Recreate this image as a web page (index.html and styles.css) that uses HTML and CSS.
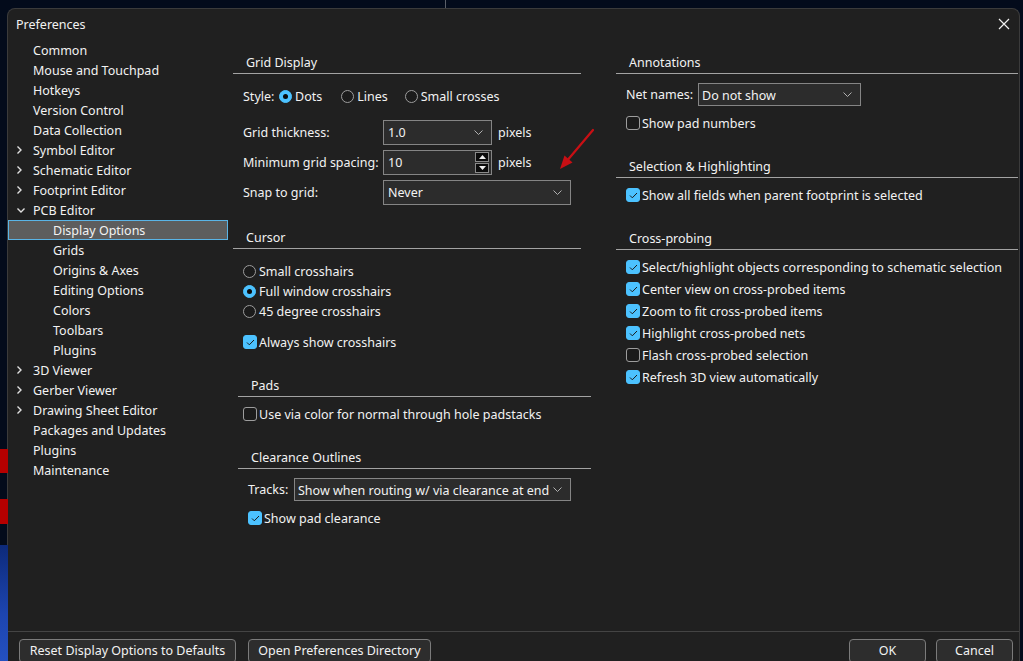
FILE: index.html
```html
<!DOCTYPE html>
<html>
<head>
<meta charset="utf-8">
<title>Preferences</title>
<link rel="stylesheet" href="styles.css">
</head>
<body>
<div class="desk-line"></div>
<div class="stripe stripe-red1"></div>
<div class="stripe stripe-red2"></div>
<div class="stripe stripe-blue"></div>

<div class="dialog">
  <div class="titlebar">
    <span class="title">Preferences</span>
    <svg class="close" width="12" height="12" viewBox="0 0 12 12"><path d="M1 1L11 11M11 1L1 11" stroke="#f0f0f0" stroke-width="1.2" fill="none"/></svg>
  </div>

  <div class="main">
    <ul class="tree">
      <li class="item">Common</li>
      <li class="item">Mouse and Touchpad</li>
      <li class="item">Hotkeys</li>
      <li class="item">Version Control</li>
      <li class="item">Data Collection</li>
      <li class="item has-chev"><span class="chev"><svg width="7" height="10" viewBox="0 0 7 10"><path d="M1.5 1.5L5 5L1.5 8.5" stroke="#e0e0e0" stroke-width="1.4" fill="none"/></svg></span>Symbol Editor</li>
      <li class="item has-chev"><span class="chev"><svg width="7" height="10" viewBox="0 0 7 10"><path d="M1.5 1.5L5 5L1.5 8.5" stroke="#e0e0e0" stroke-width="1.4" fill="none"/></svg></span>Schematic Editor</li>
      <li class="item has-chev"><span class="chev"><svg width="7" height="10" viewBox="0 0 7 10"><path d="M1.5 1.5L5 5L1.5 8.5" stroke="#e0e0e0" stroke-width="1.4" fill="none"/></svg></span>Footprint Editor</li>
      <li class="item has-chev"><span class="chev"><svg width="10" height="7" viewBox="0 0 10 7"><path d="M1.5 1.5L5 5L8.5 1.5" stroke="#e0e0e0" stroke-width="1.4" fill="none"/></svg></span>PCB Editor</li>
      <li class="item sub selected">Display Options</li>
      <li class="item sub">Grids</li>
      <li class="item sub">Origins &amp; Axes</li>
      <li class="item sub">Editing Options</li>
      <li class="item sub">Colors</li>
      <li class="item sub">Toolbars</li>
      <li class="item sub">Plugins</li>
      <li class="item has-chev"><span class="chev"><svg width="7" height="10" viewBox="0 0 7 10"><path d="M1.5 1.5L5 5L1.5 8.5" stroke="#e0e0e0" stroke-width="1.4" fill="none"/></svg></span>3D Viewer</li>
      <li class="item has-chev"><span class="chev"><svg width="7" height="10" viewBox="0 0 7 10"><path d="M1.5 1.5L5 5L1.5 8.5" stroke="#e0e0e0" stroke-width="1.4" fill="none"/></svg></span>Gerber Viewer</li>
      <li class="item has-chev"><span class="chev"><svg width="7" height="10" viewBox="0 0 7 10"><path d="M1.5 1.5L5 5L1.5 8.5" stroke="#e0e0e0" stroke-width="1.4" fill="none"/></svg></span>Drawing Sheet Editor</li>
      <li class="item">Packages and Updates</li>
      <li class="item">Plugins</li>
      <li class="item">Maintenance</li>
    </ul>

    <div class="panel">
      <div class="col col-left">
        <section class="sec sec-grid">
          <div class="sec-head">Grid Display</div>
          <div class="style-row">
            <span class="lbl-style">Style:</span>
            <span class="opt"><span class="radio on"></span>Dots</span>
            <span class="opt opt-lines"><span class="radio"></span>Lines</span>
            <span class="opt opt-crosses"><span class="radio"></span>Small crosses</span>
          </div>
          <div class="frow frow-first">
            <span class="flabel">Grid thickness:</span>
            <span class="combo w-thick"><span class="cval">1.0</span><svg class="cchev" width="9" height="5" viewBox="0 0 9 5"><path d="M0.5 0.5L4.5 4.5L8.5 0.5" stroke="#b0b0b0" fill="none"/></svg></span>
            <span class="unit">pixels</span>
          </div>
          <div class="frow">
            <span class="flabel">Minimum grid spacing:</span>
            <span class="spin"><span class="cval">10</span>
              <span class="spin-btns">
                <span class="sbtn"><svg width="7" height="4" viewBox="0 0 7 4"><path d="M0 4L3.5 0L7 4Z" fill="#f0f0f0"/></svg></span>
                <span class="sbtn"><svg width="7" height="4" viewBox="0 0 7 4"><path d="M0 0L3.5 4L7 0Z" fill="#f0f0f0"/></svg></span>
              </span>
            </span>
            <span class="unit">pixels</span>
          </div>
          <div class="frow">
            <span class="flabel">Snap to grid:</span>
            <span class="combo w-snap"><span class="cval">Never</span><svg class="cchev" width="9" height="5" viewBox="0 0 9 5"><path d="M0.5 0.5L4.5 4.5L8.5 0.5" stroke="#b0b0b0" fill="none"/></svg></span>
          </div>
        </section>

        <section class="sec sec-cursor">
          <div class="sec-head">Cursor</div>
          <div class="opts">
            <div class="line"><span class="radio"></span>Small crosshairs</div>
            <div class="line"><span class="radio on"></span>Full window crosshairs</div>
            <div class="line"><span class="radio"></span>45 degree crosshairs</div>
          </div>
          <div class="line line-check"><span class="check on"><svg width="9" height="7" viewBox="0 0 9 7"><path d="M1 3.5L3.3 5.8L8 1" stroke="#1a1a1a" stroke-width="1" fill="none"/></svg></span>Always show crosshairs</div>
        </section>

        <section class="sec sec-pads">
          <div class="sec-head">Pads</div>
          <div class="line line-first"><span class="check"></span>Use via color for normal through hole padstacks</div>
        </section>

        <section class="sec sec-clear">
          <div class="sec-head">Clearance Outlines</div>
          <div class="frow2">
            <span class="flabel2">Tracks:</span>
            <span class="combo combo-sm w-tracks"><span class="cval">Show when routing w/ via clearance at end</span><svg class="cchev" width="9" height="5" viewBox="0 0 9 5"><path d="M0.5 0.5L4.5 4.5L8.5 0.5" stroke="#b0b0b0" fill="none"/></svg></span>
          </div>
          <div class="line line-first"><span class="check on"><svg width="9" height="7" viewBox="0 0 9 7"><path d="M1 3.5L3.3 5.8L8 1" stroke="#1a1a1a" stroke-width="1" fill="none"/></svg></span>Show pad clearance</div>
        </section>
      </div>

      <div class="col col-right">
        <section class="sec sec-annot">
          <div class="sec-head">Annotations</div>
          <div class="frow2">
            <span class="flabel3">Net names:</span>
            <span class="combo combo-sm w-net"><span class="cval">Do not show</span><svg class="cchev" width="9" height="5" viewBox="0 0 9 5"><path d="M0.5 0.5L4.5 4.5L8.5 0.5" stroke="#b0b0b0" fill="none"/></svg></span>
          </div>
          <div class="line line-first"><span class="check"></span>Show pad numbers</div>
        </section>

        <section class="sec sec-sel">
          <div class="sec-head">Selection &amp; Highlighting</div>
          <div class="line line-first"><span class="check on"><svg width="9" height="7" viewBox="0 0 9 7"><path d="M1 3.5L3.3 5.8L8 1" stroke="#1a1a1a" stroke-width="1" fill="none"/></svg></span>Show all fields when parent footprint is selected</div>
        </section>

        <section class="sec sec-cross">
          <div class="sec-head">Cross-probing</div>
          <div class="cross-list">
            <div class="line tall"><span class="check on"><svg width="9" height="7" viewBox="0 0 9 7"><path d="M1 3.5L3.3 5.8L8 1" stroke="#1a1a1a" stroke-width="1" fill="none"/></svg></span>Select/highlight objects corresponding to schematic selection</div>
            <div class="line tall"><span class="check on"><svg width="9" height="7" viewBox="0 0 9 7"><path d="M1 3.5L3.3 5.8L8 1" stroke="#1a1a1a" stroke-width="1" fill="none"/></svg></span>Center view on cross-probed items</div>
            <div class="line tall"><span class="check on"><svg width="9" height="7" viewBox="0 0 9 7"><path d="M1 3.5L3.3 5.8L8 1" stroke="#1a1a1a" stroke-width="1" fill="none"/></svg></span>Zoom to fit cross-probed items</div>
            <div class="line tall"><span class="check on"><svg width="9" height="7" viewBox="0 0 9 7"><path d="M1 3.5L3.3 5.8L8 1" stroke="#1a1a1a" stroke-width="1" fill="none"/></svg></span>Highlight cross-probed nets</div>
            <div class="line tall"><span class="check"></span>Flash cross-probed selection</div>
            <div class="line tall"><span class="check on"><svg width="9" height="7" viewBox="0 0 9 7"><path d="M1 3.5L3.3 5.8L8 1" stroke="#1a1a1a" stroke-width="1" fill="none"/></svg></span>Refresh 3D view automatically</div>
          </div>
        </section>
      </div>
    </div>
  </div>

  <div class="footer">
    <button class="btn b-reset">Reset Display Options to Defaults</button>
    <button class="btn b-open">Open Preferences Directory</button>
    <span class="spacer"></span>
    <button class="btn b-ok">OK</button>
    <button class="btn b-cancel">Cancel</button>
  </div>
</div>

<svg class="arrow" width="44" height="48" viewBox="555 126 44 48">
  <path d="M593 130L566 162" stroke="#c80f14" stroke-width="2.2" fill="none" stroke-linecap="round"/>
  <path d="M560 169L572.5 162.5L564.5 155.5Z" fill="#c80f14"/>
</svg>
</body>
</html>
```

FILE: styles.css
```css
* { box-sizing: border-box; }

html, body {
  margin: 0;
  height: 661px;
  overflow: hidden;
}

body {
  background: #030b1b;
  padding: 8px 0 0 7px;
  font-family: "Noto Sans", "Open Sans", sans-serif;
  font-size: 12.5px;
  color: #f2f2f2;
  position: relative;
}

/* desktop backdrop pieces */
.desk-line {
  position: absolute;
  left: 445px;
  top: 0;
  width: 1px;
  height: 8px;
  background: #5a5f68;
}
.stripe {
  position: absolute;
  left: 0;
  width: 8px;
}
.stripe-red1 { top: 449px; height: 24px; background: #b50000; }
.stripe-red2 { top: 499px; height: 25px; background: #b50000; }
.stripe-blue {
  top: 545px;
  height: 116px;
  background: linear-gradient(180deg, #0d2a7a 0%, #1d45b0 60%, #2450c0 100%);
}

.dialog {
  width: 1013px;
  height: 660px;
  background: #202020;
  border: 1px solid #3b3b3b;
  border-bottom: none;
  border-radius: 8px 8px 0 0;
  display: flex;
  flex-direction: column;
  overflow: hidden;
}

.titlebar {
  height: 31px;
  flex: none;
  display: flex;
  align-items: center;
  padding-left: 8px;
  padding-right: 8px;
}
.title { flex: 1; font-size: 12.5px; }
.close { margin-top: -1px; margin-right: 1px; }

.main {
  height: 591px;
  flex: none;
  display: flex;
}

/* tree */
.tree {
  list-style: none;
  margin: 0;
  padding: 0;
  width: 222px;
  flex: none;
}
.item {
  height: 20px;
  display: flex;
  align-items: center;
  padding-left: 25px;
  white-space: nowrap;
}
.item.has-chev { padding-left: 8px; }
.chev {
  width: 17px;
  display: flex;
  align-items: center;
}
.item.sub { padding-left: 45px; }
.item.selected {
  width: 220px;
  background: #5d5d5d;
  border: 1px solid #5ab4e6;
  padding-left: 44px;
}

/* panel */
.panel {
  margin-left: 3px;
  display: flex;
  padding-top: 11px;
}
.col-left { width: 358px; flex: none; }
.col-right { width: 402px; flex: none; margin-left: 25px; }

.sec-head {
  height: 23px;
  line-height: 22px;
  padding-top: 1px;
  padding-left: 13px;
  border-bottom: 1px solid #a3a3a3;
}

.sec-grid { width: 348px; }
.sec-cursor { width: 348px; margin-top: 21px; }
.sec-pads { margin-left: 5px; width: 353px; margin-top: 22px; }
.sec-clear { margin-left: 5px; width: 353px; margin-top: 22px; }
.sec-sel { margin-top: 22px; }
.sec-cross { margin-top: 22px; }

.sec-grid > .style-row,
.sec-grid > .frow,
.sec-cursor > .opts,
.sec-cursor > .line { margin-left: 10px; }
.sec-pads > .line { margin-left: 5px; }
.sec-clear > .frow2,
.sec-clear > .line { margin-left: 10px; }
.col-right .frow2,
.col-right .line { margin-left: 10px; }

.style-row {
  margin-top: 12px;
  height: 20px;
  display: flex;
  align-items: center;
}
.lbl-style { width: 36px; }
.opt { display: flex; align-items: center; }
.opt-lines { margin-left: 19px; }
.opt-crosses { margin-left: 17px; }

.radio {
  width: 13px;
  height: 13px;
  border-radius: 50%;
  border: 1px solid #9d9d9d;
  background: #1b1b1b;
  margin-right: 3px;
  flex: none;
  position: relative;
}
.radio.on {
  background: #4cc2ff;
  border-color: #4cc2ff;
}
.radio.on::after {
  content: "";
  position: absolute;
  left: 3px;
  top: 3px;
  width: 5px;
  height: 5px;
  border-radius: 50%;
  background: #0a0a0a;
}

.check {
  width: 14px;
  height: 14px;
  border-radius: 3px;
  border: 1px solid #9d9d9d;
  background: #1b1b1b;
  margin-right: 2px;
  flex: none;
  display: flex;
  align-items: center;
  justify-content: center;
}
.check.on {
  background: #4cc2ff;
  border-color: #4cc2ff;
}

.line {
  height: 20px;
  display: flex;
  align-items: center;
  white-space: nowrap;
}
.line.tall { height: 22px; }
.opts { margin-top: 12px; }
.line-check { margin-top: 11px; }
.line-first { margin-top: 7px; }
.cross-list { margin-top: 6px; }

.frow {
  height: 25px;
  display: flex;
  align-items: center;
  margin-top: 5px;
}
.frow-first { margin-top: 14px; }
.flabel { width: 140px; flex: none; }
.unit { margin-left: 6px; }

.combo, .spin {
  height: 25px;
  border: 1px solid #858585;
  background: #2c2c2c;
  display: flex;
  align-items: center;
  padding-left: 4px;
  flex: none;
}
.cval { flex: 1; white-space: nowrap; overflow: hidden; }
.cchev { margin-right: 8px; flex: none; }
.w-thick { width: 109px; }
.w-snap { width: 188px; }
.spin { width: 109px; padding-right: 2px; }
.spin-btns {
  display: flex;
  flex-direction: column;
  gap: 1px;
}
.sbtn {
  width: 14px;
  height: 10px;
  background: #0c0c0c;
  border: 1px solid #8a8a8a;
  display: flex;
  align-items: center;
  justify-content: center;
}

.frow2 {
  height: 23px;
  display: flex;
  align-items: center;
  margin-top: 9px;
}
.combo-sm { height: 23px; padding-left: 3px; }
.combo-sm .cval { padding-top: 1px; }
.flabel2 { width: 46px; flex: none; }
.flabel3 { width: 72px; flex: none; }
.w-tracks { width: 277px; }
.w-net { width: 163px; }

/* footer */
.footer {
  flex: none;
  border-top: 1px solid #444;
  display: flex;
  padding: 7px 6px 0 11px;
  gap: 12px;
}
.spacer { flex: 1; }
.btn {
  height: 24px;
  background: #2d2d2d;
  border: 1px solid #7b7b7b;
  border-radius: 4px;
  color: #f2f2f2;
  font-family: "Noto Sans", "Open Sans", sans-serif;
  font-size: 12.5px;
  padding: 0 0 1px 0;
  flex: none;
}
.b-reset { width: 217px; }
.b-open { width: 183px; }
.b-ok { width: 77px; }
.b-cancel { width: 77px; margin-left: -2px; }

.arrow {
  position: absolute;
  left: 555px;
  top: 126px;
}
```
